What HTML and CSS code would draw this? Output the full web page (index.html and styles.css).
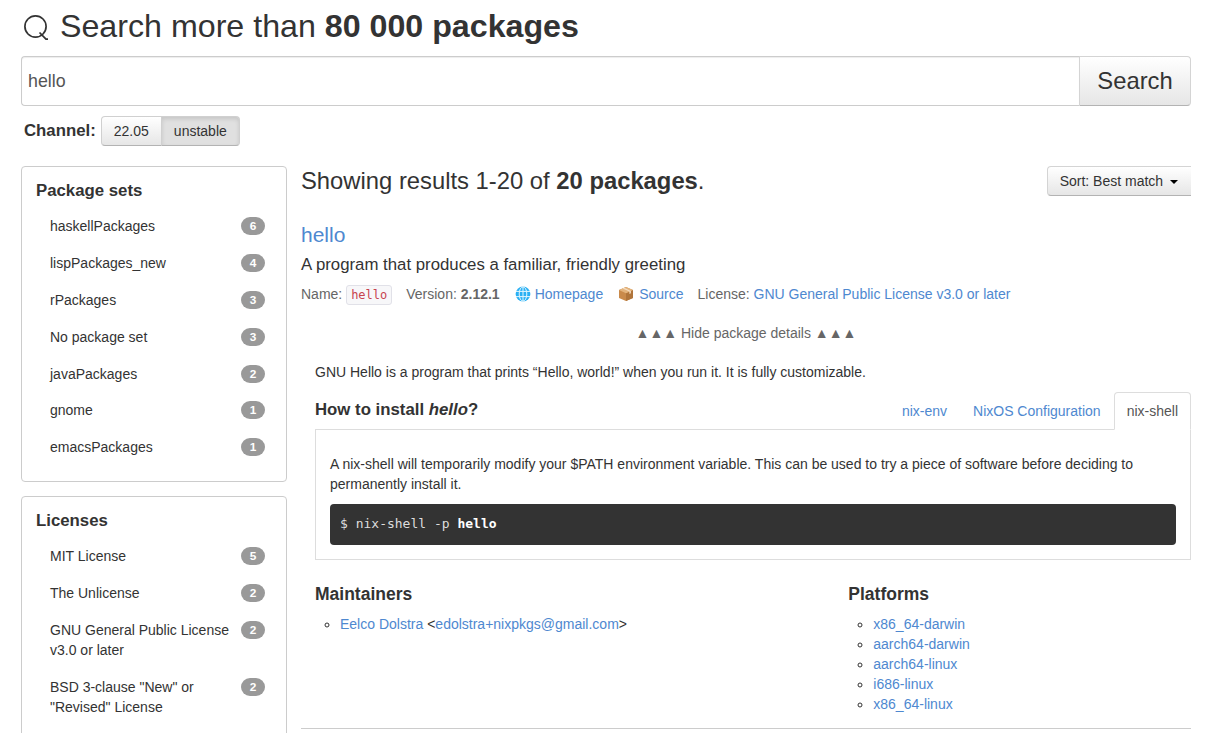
FILE: index.html
```html
<!DOCTYPE html>
<html lang="en">
<head>
<meta charset="utf-8">
<title>Search packages</title>
<link rel="stylesheet" href="styles.css">
</head>
<body>
<div class="page">
  <h1 class="title">
    <svg class="search-icon" viewBox="0 0 26 26" width="26" height="26"><circle cx="12.5" cy="12.5" r="10.6" fill="none" stroke="#333" stroke-width="1.7"/><path d="M16.5 18.5 L23 25.2 H25" fill="none" stroke="#333" stroke-width="1.7"/></svg>
    <span>Search more than <strong>80 000 packages</strong></span>
  </h1>
  <div class="search-row">
    <div class="search-input">hello</div>
    <div class="search-btn">Search</div>
  </div>
  <div class="channel-row">
    <strong class="channel-label">Channel:</strong>
    <div class="btn-group">
      <span class="chan">22.05</span>
      <span class="chan chan-active">unstable</span>
    </div>
  </div>
  <div class="columns">
    <aside class="sidebar">
      <section class="card">
        <h2 class="card-title">Package sets</h2>
        <ul class="facets">
          <li class="facet"><span class="facet-name">haskellPackages</span><span class="badge">6</span></li>
          <li class="facet"><span class="facet-name">lispPackages_new</span><span class="badge">4</span></li>
          <li class="facet"><span class="facet-name">rPackages</span><span class="badge">3</span></li>
          <li class="facet"><span class="facet-name">No package set</span><span class="badge">3</span></li>
          <li class="facet"><span class="facet-name">javaPackages</span><span class="badge">2</span></li>
          <li class="facet"><span class="facet-name">gnome</span><span class="badge">1</span></li>
          <li class="facet"><span class="facet-name">emacsPackages</span><span class="badge">1</span></li>
        </ul>
      </section>
      <section class="card">
        <h2 class="card-title">Licenses</h2>
        <ul class="facets">
          <li class="facet"><span class="facet-name">MIT License</span><span class="badge">5</span></li>
          <li class="facet"><span class="facet-name">The Unlicense</span><span class="badge">2</span></li>
          <li class="facet"><span class="facet-name">GNU General Public License v3.0 or later</span><span class="badge">2</span></li>
          <li class="facet"><span class="facet-name">BSD 3-clause "New" or "Revised" License</span><span class="badge">2</span></li>
        </ul>
      </section>
    </aside>
    <main class="results">
      <div class="results-head">
        <h2 class="results-title">Showing results 1-20 of <strong>20 packages</strong>.</h2>
        <div class="sort-btn">Sort: Best match <span class="caret"></span></div>
      </div>
      <article class="package">
        <a class="pkg-name">hello</a>
        <p class="pkg-desc">A program that produces a familiar, friendly greeting</p>
        <div class="pkg-meta">
          <span>Name: <code class="pkg-code">hello</code></span>
          <span>Version: <strong>2.12.1</strong></span>
          <span class="meta-link meta-home">
            <svg class="emoji" viewBox="0 0 16 16" width="16" height="16"><circle cx="8" cy="8" r="7.4" fill="#29b0f4"/><g fill="none" stroke="#e3f6fe" stroke-width="1"><path d="M1 5.4 H15 M1 10.6 H15 M8 .8 V15.2"/><ellipse cx="8" cy="8" rx="3.8" ry="7.2"/></g></svg>
            <a>Homepage</a></span>
          <span class="meta-link">
            <svg class="emoji" viewBox="0 0 16 16" width="16" height="16"><path d="M8 1 L15 4 V12 L8 15 L1 12 V4 Z" fill="#c98a4b"/><path d="M8 7.2 L15 4 V12 L8 15 Z" fill="#b0753b"/><path d="M8 1 L15 4 L8 7.2 L1 4 Z" fill="#e3b37c"/><path d="M4.6 2.5 L11.4 5.6 V8 L12.9 7.3 V5 L6.4 1.8 Z" fill="#f3dcc0"/></svg>
            <a>Source</a></span>
          <span>License: <a>GNU General Public License v3.0 or later</a></span>
        </div>
        <div class="toggle">▲▲▲ Hide package details ▲▲▲</div>
        <div class="details">
          <p class="long-desc">GNU Hello is a program that prints “Hello, world!” when you run it. It is fully customizable.</p>
          <div class="install-head">
            <h3 class="install-title">How to install <em>hello</em>?</h3>
            <ul class="tabs">
              <li class="tab"><a>nix-env</a></li>
              <li class="tab"><a>NixOS Configuration</a></li>
              <li class="tab tab-active">nix-shell</li>
            </ul>
          </div>
          <div class="tab-pane">
            <p class="pane-text">A nix-shell will temporarily modify your $PATH environment variable. This can be used to try a piece of software before deciding to permanently install it.</p>
            <pre class="code-block">$ nix-shell -p <strong>hello</strong></pre>
          </div>
          <div class="bottom-cols">
            <div class="col-maint">
              <h3 class="section-title">Maintainers</h3>
              <ul class="circle-list">
                <li><a>Eelco Dolstra</a> &lt;<a>edolstra+nixpkgs@gmail.com</a>&gt;</li>
              </ul>
            </div>
            <div class="col-plat">
              <h3 class="section-title">Platforms</h3>
              <ul class="circle-list">
                <li><a>x86_64-darwin</a></li>
                <li><a>aarch64-darwin</a></li>
                <li><a>aarch64-linux</a></li>
                <li><a>i686-linux</a></li>
                <li><a>x86_64-linux</a></li>
              </ul>
            </div>
          </div>
        </div>
      </article>
      <hr class="divider">
    </main>
  </div>
</div>
</body>
</html>
```

FILE: styles.css
```css
* { box-sizing: border-box; }
html, body { margin: 0; padding: 0; height: 733px; overflow: hidden; background: #fff; }
body { font-family: "Liberation Sans", Arial, sans-serif; font-size: 14px; line-height: 20px; color: #333; }
a { color: #4e88d0; text-decoration: none; }
ul { list-style: none; margin: 0; padding: 0; }
p { margin: 0; }

.page { padding: 0 22px 0 21px; }

.title { display: flex; gap: 11px; margin: 0; padding: 6px 0 0 2px; height: 56px; font-size: 32.2px; line-height: 40px; font-weight: normal; align-items: flex-start; }
.search-icon { margin-top: 8px; flex: none; }

.search-row { display: flex; height: 50px; }
.search-input { flex: 1; border: 1px solid #ccc; border-right: 0; border-radius: 4px 0 0 4px; padding: 0 6px; font-size: 17.8px; line-height: 48px; color: #555; box-shadow: inset 0 1px 1px rgba(0,0,0,.075); }
.search-btn { width: 112px; border: 1px solid #d4d4d4; border-bottom-color: #b3b3b3; border-radius: 0 4px 4px 0; background: linear-gradient(#fff, #e6e6e6); font-size: 23.8px; line-height: 48px; text-align: center; }

.channel-row { display: flex; align-items: center; gap: 5px; margin-top: 10px; padding-left: 3px; height: 30px; }
.channel-label { font-size: 16.8px; }
.btn-group { display: flex; height: 30px; font-size: 14px; }
.chan { padding: 0 12px; line-height: 28px; border: 1px solid #d0d0d0; border-bottom-color: #b3b3b3; border-radius: 4px 0 0 4px; background: linear-gradient(#fff, #e6e6e6); }
.chan-active { margin-left: -1px; border-radius: 0 4px 4px 0; background: #e0e0e0; box-shadow: inset 0 2px 4px rgba(0,0,0,.12); }

.columns { display: flex; gap: 14px; margin-top: 20px; align-items: flex-start; }
.sidebar { flex: none; width: 266px; display: flex; flex-direction: column; gap: 14px; }
.card { border: 1px solid #ccc; border-radius: 4px; padding: 14px 21px 15.3px 14px; }
.card-title { margin: 0 0 7px; font-size: 16.8px; line-height: 20px; font-weight: bold; }
.facet { display: flex; justify-content: space-between; align-items: flex-start; padding: 8.4px 0 8.4px 14px; gap: 8px; }
.facet-name { flex: 1; }
.badge { flex: none; width: 24px; height: 18px; margin-top: 1px; border-radius: 9px; background: #999; color: #fff; font-size: 11.84px; font-weight: bold; line-height: 18px; text-align: center; }

.results { flex: 1; min-width: 0; }
.results-head { display: flex; justify-content: space-between; align-items: flex-start; height: 30px; }
.results-title { margin: 0; font-size: 23.8px; line-height: 30px; font-weight: normal; }
.sort-btn { height: 30px; padding: 0 12px 0 12px; line-height: 28px; border: 1px solid #d4d4d4; border-right: 0; border-bottom-color: #b3b3b3; border-radius: 4px 0 0 4px; background: linear-gradient(#fff, #e6e6e6); }
.caret { display: inline-block; width: 0; height: 0; margin: 0 1px 0 3px; vertical-align: middle; border-left: 4px solid transparent; border-right: 4px solid transparent; border-top: 4px solid #000; }

.package { padding-top: 24px; }
.pkg-name { display: block; font-size: 21px; line-height: 30px; }
.pkg-desc { font-size: 16.8px; line-height: 20px; margin-top: 5px; }
.pkg-meta { display: flex; gap: 14px; margin-top: 9px; height: 20px; color: #666; }
.pkg-code { display: inline-block; padding: 0 4px; border: 1px solid #e1e1e8; border-radius: 3px; background: #f7f7f9; color: #c7434f; font-family: "DejaVu Sans Mono", monospace; font-size: 12px; line-height: 18px; vertical-align: top; margin-top: 1px; }
.meta-link { display: inline-flex; gap: 5px; align-items: center; }
.meta-home { gap: 4px; margin: 0 1px; }
.emoji { flex: none; }
.toggle { margin-top: 19px; height: 20px; text-align: center; color: #666; }

.details { padding: 19px 0 0 14px; }
.install-head { display: flex; justify-content: space-between; align-items: flex-end; height: 38px; margin-top: 10px; border-bottom: 1px solid #ddd; }
.install-title { margin: 0; padding-bottom: 9px; font-size: 16.8px; line-height: 20px; font-weight: bold; }
.section-title { margin: 0; font-size: 17.5px; line-height: 20px; font-weight: bold; }
.tabs { display: flex; gap: 0; margin-bottom: -1px; }
.tab { padding: 8px 12px; line-height: 20px; border: 1px solid transparent; border-radius: 4px 4px 0 0; }
.tab-active { border-color: #ddd; border-bottom-color: #fff; background: #fff; color: #555; }
.tab-pane { border: 1px solid #ddd; border-top: 0; padding: 24px 14px 14px; }
.code-block { margin: 10px 0 0; padding: 10px; height: 41px; background: #333; color: #ddd; border-radius: 4px; font-family: "DejaVu Sans Mono", monospace; font-size: 13px; line-height: 20px; }
.code-block strong { color: #fff; }

.bottom-cols { display: flex; margin-top: 24px; }
.col-maint { width: 533.3px; }
.col-plat { flex: 1; }
.circle-list { list-style: circle; margin-top: 10px; padding-left: 25px; }

.divider { margin: 14px 0 0; border: 0; border-top: 1px solid #ccc; }
```
